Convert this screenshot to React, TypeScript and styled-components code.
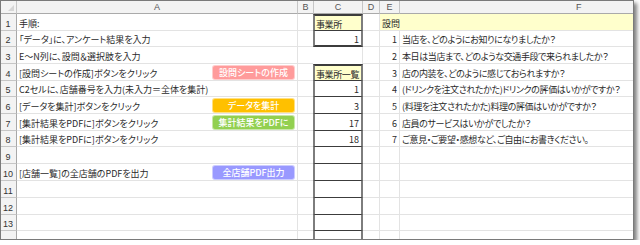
import styled, { createGlobalStyle } from "styled-components";

const GlobalStyle = createGlobalStyle`
  body {
    margin: 0;
    background: #ffffff;
  }
`;

const FONT = `"Noto Sans CJK JP", "Noto Sans", sans-serif`;

const GRID_LINE = "#e3e3e3";
const HEAD_LINE = "#c6c6c6";
const BOX_SIDE = "#7d7d7d";
const BOX_LINE = "#3c3c3c";

const Frame = styled.div`
  width: 634px;
  height: 240px;
  box-sizing: border-box;
  border: 1px solid #7a7a7a;
  box-shadow: 3px 3px 4px rgba(0, 0, 0, 0.5);
  overflow: hidden;
  background: #fff;
  font-family: ${FONT};
  font-feature-settings: "palt";
  font-size: 9px;
  color: #2a2a2a;
`;

const Sheet = styled.div`
  display: grid;
  grid-template-columns: 16px 281px 16px 49px 17px 20px 300px;
  grid-template-rows: 13px 17px 16px 17px 17px 16px 17px 17px 16px 17px 17px 17px 17px 16px 17px;
`;

const Cell = styled.div`
  box-sizing: border-box;
  border-right: 1px solid ${GRID_LINE};
  border-bottom: 1px solid ${GRID_LINE};
  display: flex;
  align-items: center;
  padding: 2px 2px 0;
  white-space: nowrap;
  min-width: 0;
`;

const ColHead = styled(Cell)<{ $offset?: number }>`
  background: #f3f3f3;
  border-right-color: ${HEAD_LINE};
  border-bottom-color: #aaaaaa;
  justify-content: ${(p) => (p.$offset ? "flex-start" : "center")};
  padding: 0 0 0 ${(p) => p.$offset ?? 0}px;
  font-size: 9px;
  color: #555;
  font-family: "Liberation Sans", sans-serif;
`;

const Corner = styled(ColHead)`
  position: relative;
  &::after {
    content: "";
    position: absolute;
    right: 2px;
    bottom: 2px;
    border-left: 6px solid transparent;
    border-bottom: 6px solid #d6d6d6;
  }
`;

const RowHead = styled(Cell)`
  background: #f3f3f3;
  border-right-color: #a8a8a8;
  border-bottom-color: ${HEAD_LINE};
  justify-content: center;
  align-items: flex-end;
  padding: 0 1px 1px 0;
  font-size: 9px;
  color: #333;
  font-family: "Liberation Sans", sans-serif;
`;

const StepCell = styled(Cell)`
  justify-content: space-between;
  padding-right: 2px;
`;

const SheetButton = styled.div<{ $color: string }>`
  width: 83px;
  height: 15px;
  box-sizing: border-box;
  border-radius: 3px;
  background: ${(p) => p.$color};
  border: 1px solid rgba(255, 255, 255, 0.5);
  color: #fff;
  font-size: 9px;
  font-weight: 500;
  display: flex;
  align-items: center;
  justify-content: center;
  margin-top: -2px;
`;

type Box = "title" | "value" | "list" | "plain";

const StoreCell = styled(Cell)<{ $box: Box; $top?: boolean }>`
  justify-content: ${(p) => (p.$box === "title" ? "flex-start" : "flex-end")};
  background: ${(p) => (p.$box === "title" ? "#ffffcc" : "#fff")};
  letter-spacing: ${(p) => (p.$box === "title" ? "-0.4px" : "0")};
  padding-left: 1px;
  ${(p) =>
    p.$box !== "plain" &&
    `
    border-left: 2px solid ${BOX_SIDE};
    border-right: 2px solid ${BOX_SIDE};
  `}
  ${(p) => p.$top && `border-top: 2px solid ${BOX_LINE};`}
  border-bottom: ${(p) =>
    p.$box === "value"
      ? `2px solid ${BOX_LINE}`
      : p.$box === "plain"
        ? "none"
        : `1px solid ${BOX_LINE}`};
  margin-left: -1px;
`;

const Title = styled(Cell)`
  grid-column: span 2;
  background: #ffffcc;
  border-right: none;
`;

const NumCell = styled(Cell)`
  justify-content: flex-end;
`;

const QuestionCell = styled(Cell)`
  letter-spacing: -0.4px;
`;

const steps: Record<number, { text: string; button?: { label: string; color: string } }> = {
  1: { text: "手順:" },
  2: { text: "「データ」に、アンケート結果を入力" },
  3: { text: "E～N列に、設問＆選択肢を入力" },
  4: {
    text: "[設問シートの作成]ボタンをクリック",
    button: { label: "設問シートの作成", color: "#ff9b9b" },
  },
  5: { text: "C2セルに、店舗番号を入力(未入力＝全体を集計)" },
  6: {
    text: "[データを集計]ボタンをクリック",
    button: { label: "データを集計", color: "#ffc000" },
  },
  7: {
    text: "[集計結果をPDFに]ボタンをクリック",
    button: { label: "集計結果をPDFに", color: "#92d050" },
  },
  8: { text: "[集計結果をPDFに]ボタンをクリック" },
  10: {
    text: "[店舗一覧]の全店舗のPDFを出力",
    button: { label: "全店舗PDF出力", color: "#9999ff" },
  },
};

const stores: Record<number, { box: Box; text?: string; top?: boolean }> = {
  1: { box: "title", text: "事業所", top: true },
  2: { box: "value", text: "1" },
  3: { box: "plain" },
  4: { box: "title", text: "事業所一覧", top: true },
  5: { box: "list", text: "1" },
  6: { box: "list", text: "3" },
  7: { box: "list", text: "17" },
  8: { box: "list", text: "18" },
};

const questions = [
  "当店を、どのようにお知りになりましたか？",
  "本日は当店まで、どのような交通手段で来られましたか？",
  "店の内装を、どのように感じておられますか？",
  "(ドリンクを注文されたかた)ドリンクの評価はいかがですか？",
  "(料理を注文されたかた)料理の評価はいかがですか？",
  "店員のサービスはいかがでしたか？",
  "ご意見・ご要望・感想など、ご自由にお書きください。",
];

// 13 full rows plus the top sliver of row 14 that the window cuts off
const rows = Array.from({ length: 14 }, (_, i) => i + 1);

const App = () => {
  return (
    <>
      <GlobalStyle />
      <Frame>
        <Sheet>
          <Corner />
          <ColHead>A</ColHead>
          <ColHead>B</ColHead>
          <ColHead>C</ColHead>
          <ColHead>D</ColHead>
          <ColHead>E</ColHead>
          <ColHead $offset={176}>F</ColHead>

          {rows.map((n) => {
            const step = steps[n];
            const store = stores[n] ?? { box: "list" as Box };
            const q = questions[n - 2];
            return [
              <RowHead key={`h${n}`}>{n < 14 ? n : ""}</RowHead>,
              <StepCell key={`a${n}`}>
                <span>{step?.text}</span>
                {step?.button && (
                  <SheetButton $color={step.button.color}>{step.button.label}</SheetButton>
                )}
              </StepCell>,
              <Cell key={`b${n}`} />,
              <StoreCell key={`c${n}`} $box={store.box} $top={store.top}>
                {store.text}
              </StoreCell>,
              <Cell key={`d${n}`} />,
              ...(n === 1
                ? [<Title key="e1">設問</Title>]
                : [
                    <NumCell key={`e${n}`}>{q ? n - 1 : ""}</NumCell>,
                    <QuestionCell key={`f${n}`}>{q ?? ""}</QuestionCell>,
                  ]),
            ];
          })}
        </Sheet>
      </Frame>
    </>
  );
};

export default App;
